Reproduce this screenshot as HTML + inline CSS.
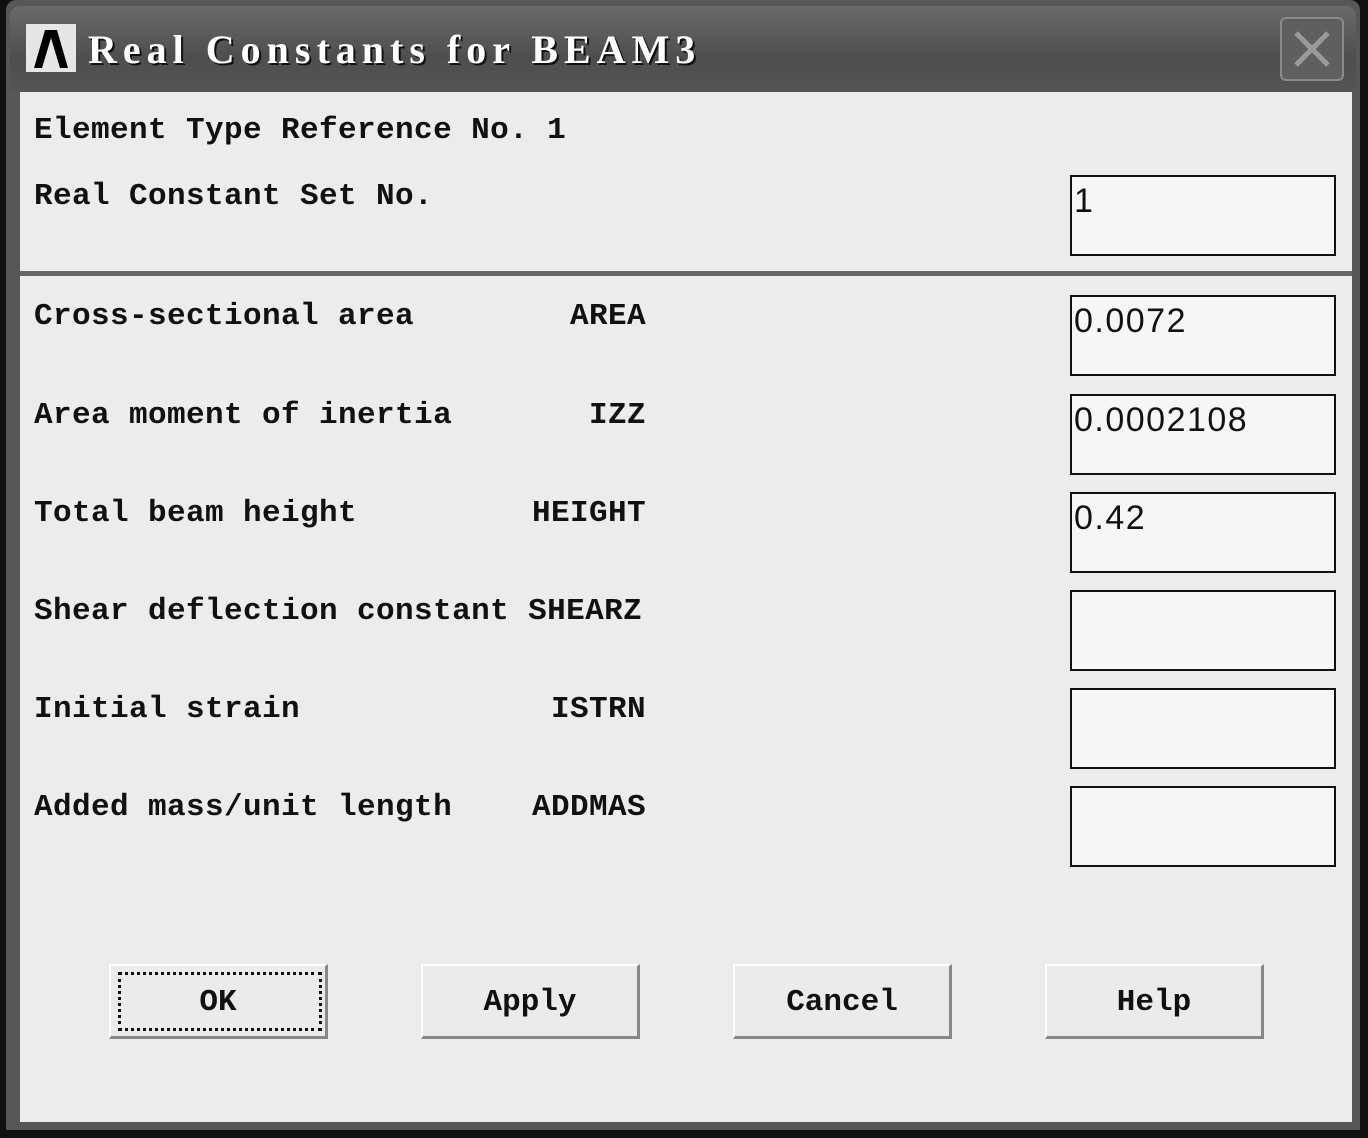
<!DOCTYPE html>
<html><head><meta charset="utf-8"><style>
html,body{margin:0;padding:0}
body{width:1368px;height:1138px;position:relative;overflow:hidden;background:#111;font-family:"Liberation Mono",monospace}
.a{position:absolute}
.frame{left:6px;top:0;width:1354px;height:1130px;background:#575757;border-radius:10px 10px 0 0}
.title{left:10px;top:6px;width:1346px;height:86px;background:linear-gradient(#6a6a6a,#4e4e4e 60%,#555);border-radius:10px 10px 0 0}
.body{left:20px;top:92px;width:1332px;height:1030px;background:#ececec}
.lbl{font-size:31px;font-weight:bold;color:#111;line-height:34px;white-space:pre;letter-spacing:0.4px}
.r{text-align:right;width:300px}
.inp{left:1070px;width:262px;height:77px;background:#f6f6f6;border:2px solid #111;box-sizing:content-box}
.inp span{position:absolute;left:2px;top:6px;font-family:"Liberation Sans",sans-serif;font-size:34px;color:#111;line-height:36px;letter-spacing:1.5px}
.btn{width:219px;height:75px;background:#ebebeb;border-top:2px solid #fff;border-left:2px solid #fff;border-right:3px solid #888;border-bottom:3px solid #888;box-sizing:border-box;text-align:center;line-height:74px;font-size:31px;font-weight:bold;color:#111}
</style></head><body>
<div class="a frame"></div>
<div class="a title"></div>
<div class="a" style="left:26px;top:24px;width:50px;height:48px;background:#e6e6e6"></div>
<svg class="a" style="left:26px;top:24px" width="50" height="48"><path d="M8 44 L19 6 L31 6 L42 44 L34 44 L25 14 L16 44 Z" fill="#000"/></svg>
<div class="a" style="left:88px;top:26px;font-family:'Liberation Serif',serif;font-weight:bold;font-size:40px;color:#fff;letter-spacing:6px;line-height:48px;text-shadow:2px 2px 0 #111;white-space:pre">Real Constants for BEAM3</div>
<div class="a" style="left:1280px;top:17px;width:64px;height:64px;border:2px solid #8a8a8a;border-radius:6px;background:#5f5f5f;box-sizing:border-box"></div>
<svg class="a" style="left:1280px;top:17px" width="64" height="64"><path d="M16 16 L48 48 M48 16 L16 48" stroke="#9a9a9a" stroke-width="5"/></svg>
<div class="a body"></div>
<div class="a" style="left:20px;top:271px;width:1332px;height:5px;background:#666"></div>
<div class="a lbl" style="left:34px;top:114px">Element Type Reference No. 1</div>
<div class="a lbl" style="left:34px;top:180px">Real Constant Set No.</div>
<div class="a inp" style="top:175px"><span>1</span></div>

<div class="a lbl" style="left:34px;top:300px">Cross-sectional area</div>
<div class="a lbl r" style="left:346px;top:300px">AREA</div>
<div class="a inp" style="top:295px"><span>0.0072</span></div>

<div class="a lbl" style="left:34px;top:399px">Area moment of inertia</div>
<div class="a lbl r" style="left:346px;top:399px">IZZ</div>
<div class="a inp" style="top:394px"><span>0.0002108</span></div>

<div class="a lbl" style="left:34px;top:497px">Total beam height</div>
<div class="a lbl r" style="left:346px;top:497px">HEIGHT</div>
<div class="a inp" style="top:492px"><span>0.42</span></div>

<div class="a lbl" style="left:34px;top:595px">Shear deflection constant SHEARZ</div>
<div class="a inp" style="top:590px"></div>

<div class="a lbl" style="left:34px;top:693px">Initial strain</div>
<div class="a lbl r" style="left:346px;top:693px">ISTRN</div>
<div class="a inp" style="top:688px"></div>

<div class="a lbl" style="left:34px;top:791px">Added mass/unit length</div>
<div class="a lbl r" style="left:346px;top:791px">ADDMAS</div>
<div class="a inp" style="top:786px"></div>

<div class="a btn" style="left:109px;top:964px">OK</div>
<div class="a" style="left:118px;top:972px;width:204px;height:59px;border:3px dotted #111;box-sizing:border-box"></div>
<div class="a btn" style="left:421px;top:964px">Apply</div>
<div class="a btn" style="left:733px;top:964px">Cancel</div>
<div class="a btn" style="left:1045px;top:964px">Help</div>
</body></html>
